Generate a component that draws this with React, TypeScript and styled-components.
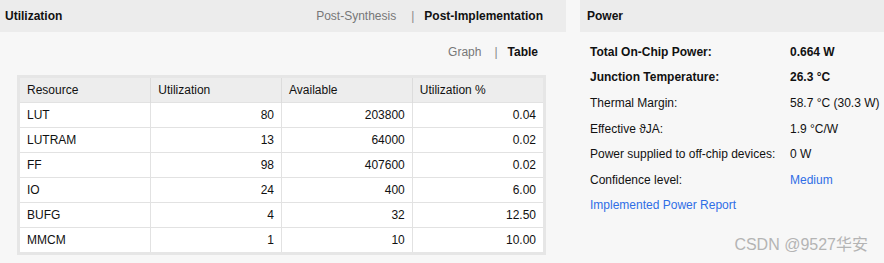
import React from "react";
import styled, { createGlobalStyle } from "styled-components";

const GlobalStyle = createGlobalStyle`
  html, body {
    margin: 0;
    padding: 0;
    background: #f7f7f7;
  }
  body {
    font-family: "Liberation Sans", Arial, sans-serif;
    font-size: 12px;
    color: #111;
  }
`;

const Page = styled.div`
  position: relative;
  display: flex;
  gap: 14px;
  width: 884px;
  height: 263px;
  overflow: hidden;
  background: #f7f7f7;
`;

const Panel = styled.section<{ $width: number }>`
  width: ${(p) => p.$width}px;
  flex: none;
  display: flex;
  flex-direction: column;
`;

const PanelHeader = styled.header<{ $pad: number }>`
  height: 32px;
  background: #ececec;
  display: flex;
  align-items: center;
  justify-content: space-between;
  padding: 0 23px 0 ${(p) => p.$pad}px;
`;

const Title = styled.h2`
  margin: 0;
  font-size: 12px;
  font-weight: bold;
`;

const Switch = styled.div`
  display: flex;
  align-items: center;
  gap: 10px;
  color: #777;
`;

const SwitchItem = styled.span<{ $active?: boolean }>`
  color: ${(p) => (p.$active ? "#111" : "#777")};
  font-weight: ${(p) => (p.$active ? "bold" : "normal")};
`;

const Sep = styled.span<{ $lead: number }>`
  color: #888;
  margin-left: ${(p) => p.$lead}px;
`;

const ViewBar = styled.div`
  display: flex;
  align-items: flex-start;
  justify-content: flex-end;
  padding: 13px 28px 0 0;
  height: 43px;
  box-sizing: border-box;
`;

const TableFrame = styled.div`
  margin-left: 17px;
  width: 523px;
  border: 3px solid #e6e6e6;
`;

const Table = styled.table`
  width: 100%;
  border-collapse: collapse;
  table-layout: fixed;
  background: #fff;
`;

const Th = styled.th`
  height: 24px;
  padding: 0 7px;
  background: #ededed;
  font-weight: normal;
  text-align: left;
  border-left: 1px solid #dcdcdc;
  &:first-child {
    border-left: none;
  }
`;

const Td = styled.td<{ $num?: boolean }>`
  height: 24px;
  padding: 0 7px;
  text-align: ${(p) => (p.$num ? "right" : "left")};
  border-left: 1px solid #e2e2e2;
  border-top: 1px solid #e2e2e2;
  &:first-child {
    border-left: none;
  }
`;

const PowerBody = styled.div`
  padding: 7px 0 0 10px;
`;

const PowerRow = styled.div<{ $strong?: boolean }>`
  height: 25.6px;
  display: flex;
  align-items: center;
  font-weight: ${(p) => (p.$strong ? "bold" : "normal")};
`;

const Label = styled.span`
  width: 200px;
  flex: none;
`;

const Link = styled.a`
  color: #2f6ee6;
  text-decoration: none;
  cursor: pointer;
`;

const Watermark = styled.div`
  position: absolute;
  right: 16px;
  bottom: 8px;
  font-family: "Liberation Sans", "Noto Sans CJK SC", sans-serif;
  font-size: 16px;
  color: #b4b4b4;
  pointer-events: none;
`;

const rows: [string, number, number, string][] = [
  ["LUT", 80, 203800, "0.04"],
  ["LUTRAM", 13, 64000, "0.02"],
  ["FF", 98, 407600, "0.02"],
  ["IO", 24, 400, "6.00"],
  ["BUFG", 4, 32, "12.50"],
  ["MMCM", 1, 10, "10.00"],
];

const power: { label: string; value: React.ReactNode; strong?: boolean }[] = [
  { label: "Total On-Chip Power:", value: "0.664 W", strong: true },
  { label: "Junction Temperature:", value: "26.3 °C", strong: true },
  { label: "Thermal Margin:", value: "58.7 °C (30.3 W)" },
  { label: "Effective ϑJA:", value: "1.9 °C/W" },
  { label: "Power supplied to off-chip devices:", value: "0 W" },
  { label: "Confidence level:", value: <Link>Medium</Link> },
];

const App: React.FC = () => (
  <>
    <GlobalStyle />
    <Page>
      <Panel $width={566}>
        <PanelHeader $pad={5}>
          <Title>Utilization</Title>
          <Switch>
            <SwitchItem>Post-Synthesis</SwitchItem>
            <Sep $lead={5}>|</Sep>
            <SwitchItem $active>Post-Implementation</SwitchItem>
          </Switch>
        </PanelHeader>
        <ViewBar>
          <Switch>
            <SwitchItem>Graph</SwitchItem>
            <Sep $lead={3}>|</Sep>
            <SwitchItem $active>Table</SwitchItem>
          </Switch>
        </ViewBar>
        <TableFrame>
          <Table>
            <thead>
              <tr>
                <Th>Resource</Th>
                <Th>Utilization</Th>
                <Th>Available</Th>
                <Th>Utilization %</Th>
              </tr>
            </thead>
            <tbody>
              {rows.map(([name, used, avail, pct]) => (
                <tr key={name}>
                  <Td>{name}</Td>
                  <Td $num>{used}</Td>
                  <Td $num>{avail}</Td>
                  <Td $num>{pct}</Td>
                </tr>
              ))}
            </tbody>
          </Table>
        </TableFrame>
      </Panel>
      <Panel $width={304}>
        <PanelHeader $pad={7}>
          <Title>Power</Title>
        </PanelHeader>
        <PowerBody>
          {power.map((r) => (
            <PowerRow key={r.label} $strong={r.strong}>
              <Label>{r.label}</Label>
              <span>{r.value}</span>
            </PowerRow>
          ))}
          <PowerRow>
            <Link>Implemented Power Report</Link>
          </PowerRow>
        </PowerBody>
      </Panel>
      <Watermark>CSDN @9527华安</Watermark>
    </Page>
  </>
);

export default App;
